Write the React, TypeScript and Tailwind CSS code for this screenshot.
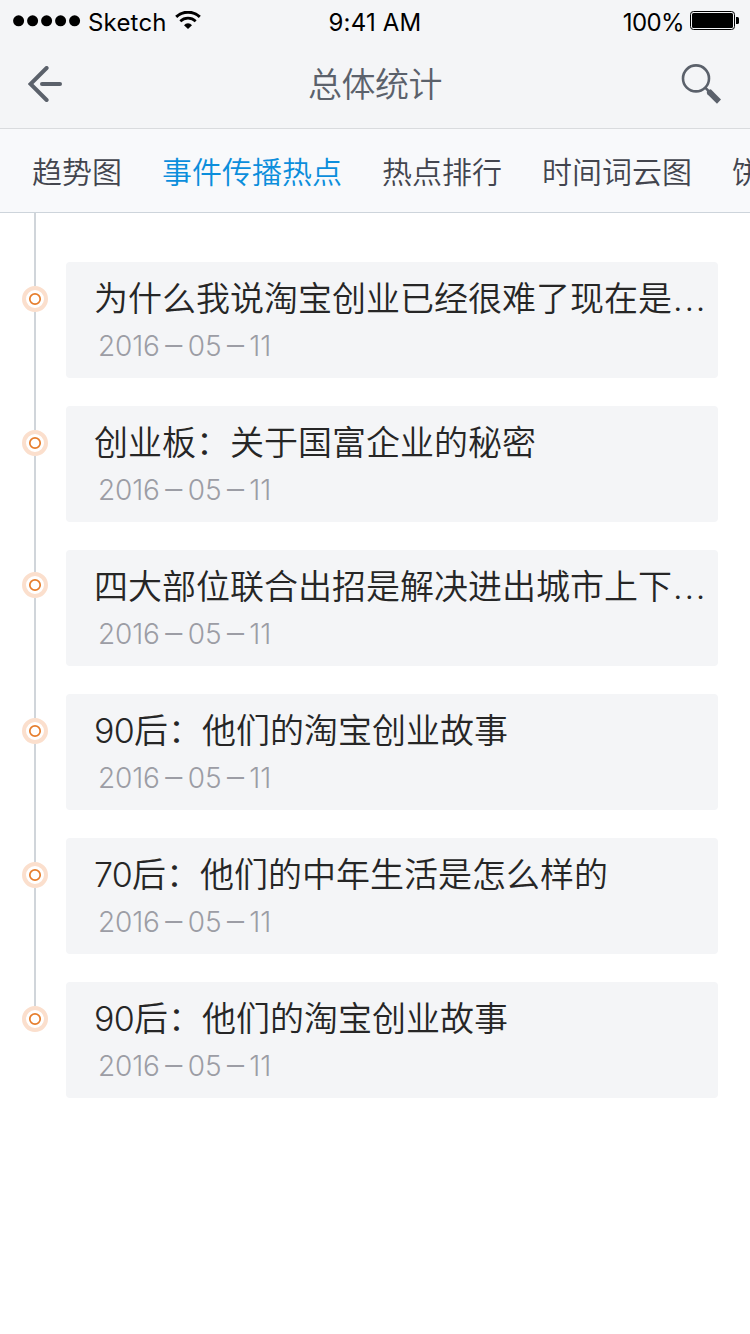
import React from "react";

type Entry = { era?: string; title: string; date: string[]; clipped?: boolean; raised?: boolean };

const tabs = ["趋势图", "事件传播热点", "热点排行", "时间词云图", "饼状图"];

const date = ["2016", "05", "11"];

const entries: Entry[] = [
  { title: "为什么我说淘宝创业已经很难了现在是", date, clipped: true },
  { title: "创业板：关于国富企业的秘密", date },
  { title: "四大部位联合出招是解决进出城市上下", date, clipped: true, raised: true },
  { era: "90", title: "后：他们的淘宝创业故事", date },
  { era: "70", title: "后：他们的中年生活是怎么样的", date },
  { era: "90", title: "后：他们的淘宝创业故事", date },
];

function StatusBar() {
  return (
    <div className="flex h-10 items-center justify-between pl-[13px] pr-[11px] text-[24px] text-black">
      <div className="flex w-[280px] items-center">
        <svg className="mt-[1px] h-3 w-[68px]" viewBox="0 0 68 12">
          {[0, 1, 2, 3, 4].map((i) => (
            <circle key={i} cx={5.6 + i * 14} cy={5.8} r={5.5} />
          ))}
        </svg>
        <span className="ml-[7px] mt-[5px] leading-[30px] tracking-[0.2px]">Sketch</span>
        <svg className="ml-2 h-[18px] w-[26px]" viewBox="0 0 26 18">
          <path d="M1.2 5.8A17.4 17.4 0 0 1 24.8 5.8" fill="none" stroke="#000" strokeWidth="3" />
          <path d="M5.3 10.2A11.4 11.4 0 0 1 20.7 10.2" fill="none" stroke="#000" strokeWidth="2.7" />
          <path d="M9 14.2A5.2 5.2 0 0 1 17 14.2L13 18Z" />
        </svg>
      </div>
      <span className="mr-0.5 mt-[5px] leading-[30px] tracking-[0.2px]">9:41 AM</span>
      <div className="flex w-[280px] items-center justify-end">
        <span className="mr-[6px] mt-[5px] leading-[30px] tracking-[-0.6px]">100%</span>
        <svg className="h-[19px] w-[49px]" viewBox="0 0 49 19">
          <rect x="0.5" y="0.5" width="44" height="18" rx="3" fill="none" stroke="#000" />
          <rect x="2" y="2" width="41" height="15" rx="1.5" />
          <path d="M46 6h1.5a1.5 1.5 0 0 1 1.5 1.5v4a1.5 1.5 0 0 1-1.5 1.5H46z" />
        </svg>
      </div>
    </div>
  );
}

function NavBar() {
  return (
    <div className="flex h-[88px] items-center justify-between pl-7 pr-7 text-[#5b616b]">
      <svg className="h-9 w-[41px]" viewBox="0 0 41 36" fill="none" stroke="currentColor" strokeWidth="4" strokeLinecap="round">
        <path d="M18.6 2L2.5 18L18.6 34" strokeLinejoin="miter" />
        <path d="M14 18H32" />
      </svg>
      <h1 className="pt-0.5 text-[34px] font-[350] leading-[44px] tracking-[-0.5px]">总体统计</h1>
      <svg className="h-10 w-[41px]" viewBox="0 0 41 40">
        <circle cx="15" cy="14.4" r="13" fill="none" stroke="currentColor" strokeWidth="2.6" />
        <path d="M24.2 23.6L28 27.4" stroke="currentColor" strokeWidth="2.6" />
        <path d="M25.8 29L26 26.4L29.8 25.2L40 35.6L36 39.8L26.4 30.2Z" fill="currentColor" />
      </svg>
    </div>
  );
}

function Tabs() {
  return (
    <nav className="flex h-21 gap-10 overflow-hidden whitespace-nowrap border-b border-[#cdd4db] bg-[#f8f9fb] pl-8 text-[30px] font-[350] leading-[86px] text-[#43454e]">
      {tabs.map((tab, i) => (
        <span key={tab} className={i === 1 ? "shrink-0 text-[#0b8edc]" : "shrink-0"}>
          {tab}
        </span>
      ))}
    </nav>
  );
}

function TimelineItem({ entry, last }: { entry: Entry; last: boolean }) {
  return (
    <li className="flex gap-[18px]">
      <div className="flex w-[26px] flex-col items-center">
        <div className={entry.raised ? "h-[22px] w-0.5 bg-[#d0d5da]" : "h-6 w-0.5 bg-[#d0d5da]"} />
        <svg className="size-[26px] shrink-0" viewBox="0 0 26 26">
          <circle cx="13" cy="13" r="11" fill="#fff" stroke="#fbdfcd" strokeWidth="4" />
          <circle cx="13" cy="13" r="5.2" fill="none" stroke="#e67d2c" strokeWidth="1.7" />
        </svg>
        {!last && <div className="w-0.5 flex-1 bg-[#d0d5da]" />}
      </div>
      <div className={last ? "" : "pb-7"}>
        <article className="h-[116px] w-[652px] rounded bg-[#f4f5f7] pl-7">
          <h2 className="whitespace-nowrap pt-[13px] text-[34px] font-[350] leading-[48px] text-[#262626]">
            {entry.era && <span className="tracking-[-0.7px]">{entry.era}</span>}
            {entry.title}
            {entry.clipped && <span className="ml-[1px] tracking-[1.8px]">...</span>}
          </h2>
          <p className="flex pl-1 text-[28px] font-[330] leading-[47px] tracking-[-0.15px] text-[#9c9da5]">
            {entry.date.map((part, i) => (
              <React.Fragment key={i}>
                {i > 0 && <span className="flex w-[28px] justify-center text-[34px] leading-[43px]">–</span>}
                <span>{part}</span>
              </React.Fragment>
            ))}
          </p>
        </article>
      </div>
    </li>
  );
}

export default function App() {
  return (
    <div className="h-[1334px] w-[750px] overflow-hidden bg-white font-['Inter','Noto_Sans_CJK_SC',sans-serif]">
      <header className="border-b border-[#d9dbde] bg-[#f4f5f7]">
        <StatusBar />
        <NavBar />
      </header>
      <Tabs />
      <main className="pl-[22px]">
        <div className="ml-3 h-[49px] w-0.5 bg-[#d0d5da]" />
        <ol>
          {entries.map((entry, i) => (
            <TimelineItem key={i} entry={entry} last={i === entries.length - 1} />
          ))}
        </ol>
      </main>
    </div>
  );
}
